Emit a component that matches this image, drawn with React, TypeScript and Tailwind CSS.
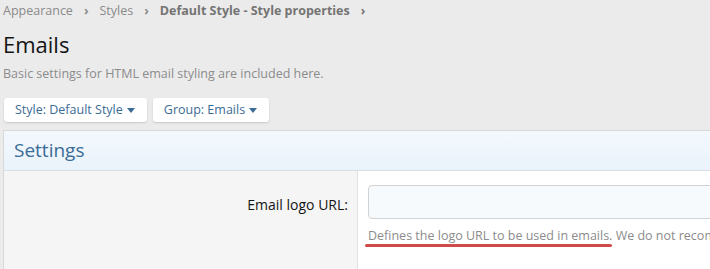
const crumbs = ['Appearance', 'Styles'];

function Caret() {
  return (
    <svg width="8" height="5" viewBox="0 0 8 5" className="ml-[4px] inline-block">
      <path d="M0 0h8L4 5z" fill="currentColor" />
    </svg>
  );
}

function MenuButton({ label }: { label: string }) {
  return (
    <button className="flex h-[24px] items-center rounded-[3px] bg-white pl-[11px] pr-[12px] text-[12.5px] text-[#3b6c97] shadow-[0_1px_2px_rgba(0,0,0,0.15)]">
      {label}
      <Caret />
    </button>
  );
}

export default function App() {
  return (
    <div
      className="h-[269px] w-[710px] overflow-hidden bg-[#ebebeb] pl-[3px]"
      style={{ fontFamily: '"Open Sans", "Noto Sans", sans-serif' }}
    >
      {/* Breadcrumb */}
      <div className="flex h-[22px] items-center gap-[11px] text-[12.5px] text-[#8a8a8a]">
        {crumbs.map((c) => (
          <span key={c} className="flex items-center gap-[11px]">
            {c}
            <span className="font-bold text-[#8a8a8a]">›</span>
          </span>
        ))}
        <span className="flex items-center gap-[11px] font-bold text-[#747474]">
          Default Style - Style properties
          <span>›</span>
        </span>
      </div>

      <h1 className="mt-[7px] text-[22px] leading-[30px] text-[#141414]">Emails</h1>
      <p className="mt-[7px] text-[12.5px] leading-[16px] text-[#8c8c8c]">
        Basic settings for HTML email styling are included here.
      </p>

      <div className="mt-[16px] flex gap-[6px] pl-[1px]">
        <MenuButton label="Style: Default Style" />
        <MenuButton label="Group: Emails" />
      </div>

      {/* Panel */}
      <div className="mt-[8px] border border-r-0 border-[#d8d8d8] bg-white">
        <div className="flex h-[40px] items-center border-b border-[#dadfe5] bg-gradient-to-b from-[#f3f8fd] to-[#eaf3fb] pl-[10px] text-[19px] text-[#3b6c97]">
          Settings
        </div>
        <div className="flex h-[100px]">
          <div className="w-[354px] shrink-0 border-r border-[#e2e2e2] bg-[#f5f5f5] pr-[9px] pt-[23px] text-right text-[14px] text-[#141414]">
            Email logo URL:
          </div>
          <div className="flex-1 pl-[10px] pt-[14px]">
            <div className="h-[34px] w-[400px] rounded-[4px] border border-[#d3d3d3] bg-[#f7fafd]" />
            <div className="relative mt-[8px] whitespace-nowrap text-[12.5px] leading-[17px] text-[#8c8c8c]">
              Defines the logo URL to be used in emails. We do not recommend
              <span className="absolute left-[-3px] top-[17px] h-[3px] w-[247px] rounded-full bg-[#d04a4a]" />
            </div>
          </div>
        </div>
      </div>
    </div>
  );
}
